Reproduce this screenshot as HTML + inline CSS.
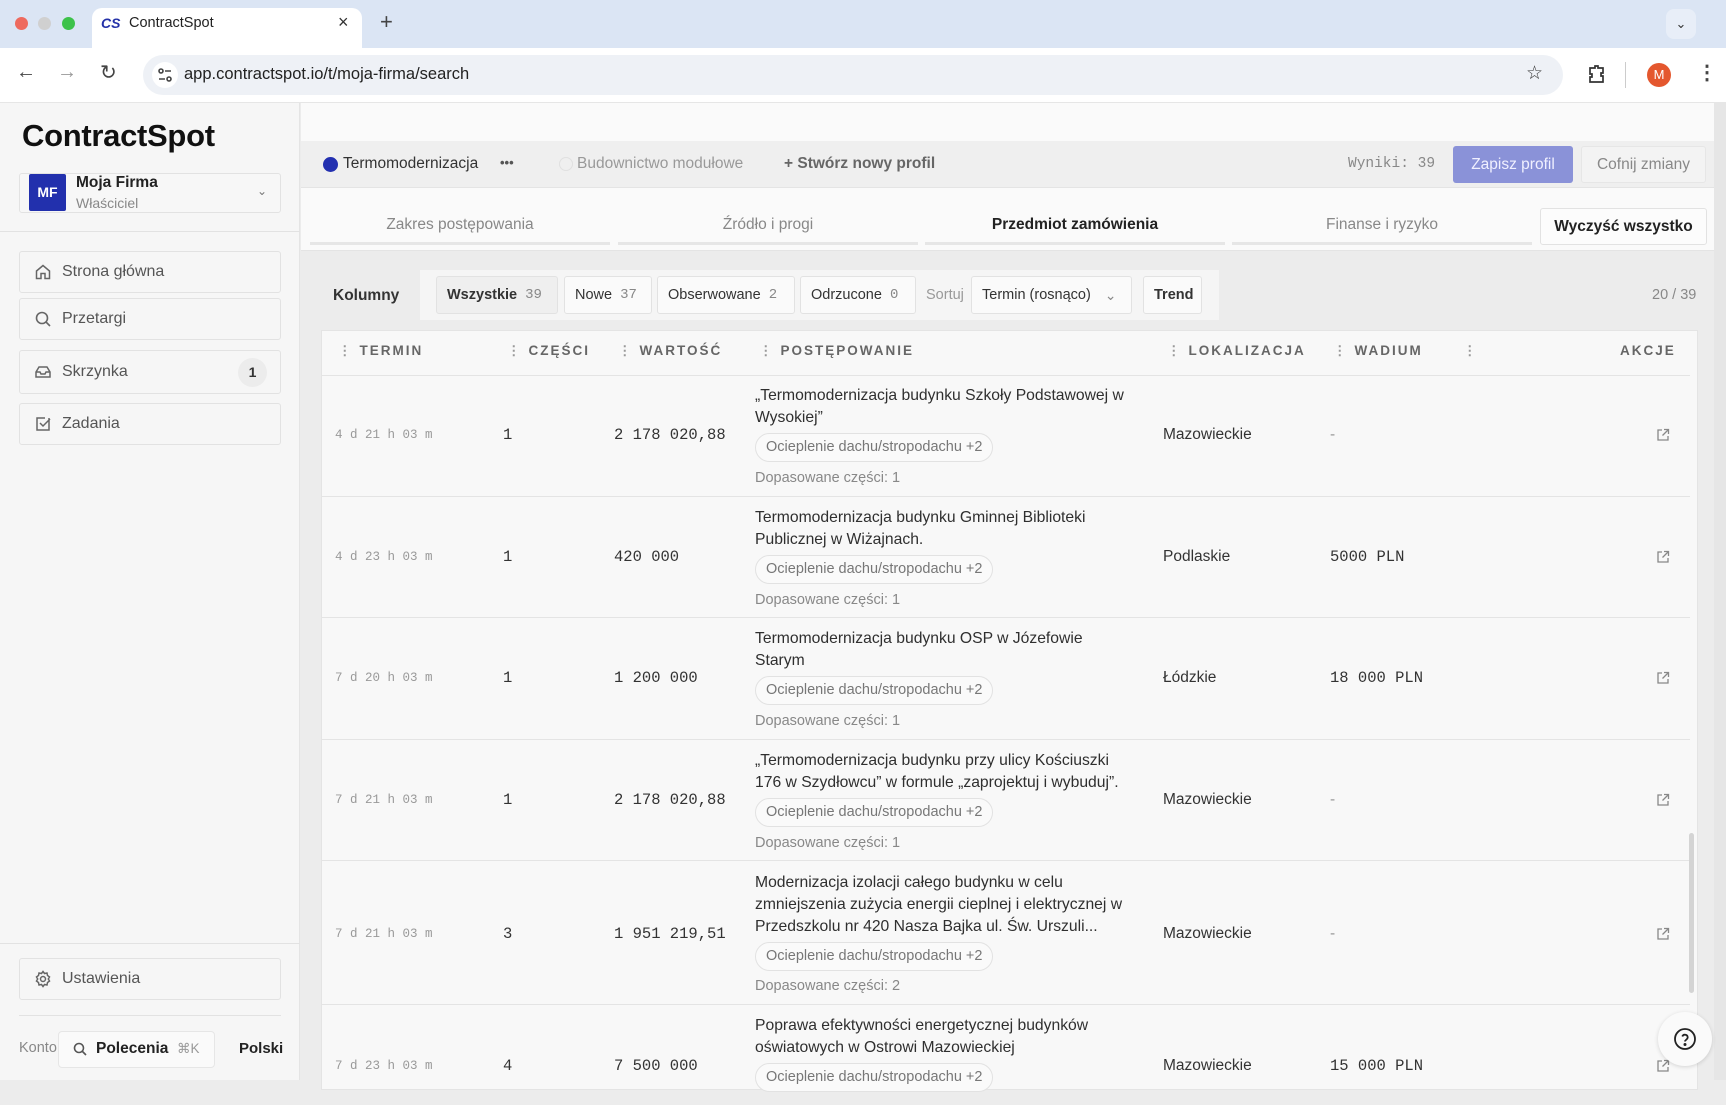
<!DOCTYPE html>
<html><head><meta charset="utf-8"><style>
*{box-sizing:border-box;margin:0;padding:0}
body{width:1726px;height:1080px;overflow:hidden;font-family:"Liberation Sans",sans-serif;color:#2a2a2a;background:#ececec;position:relative}
.a{position:absolute}
.mono{font-family:"Liberation Mono",monospace}
.nav{position:absolute;left:19px;width:262px;border:1px solid #e2e2e2;background:#f6f6f6;border-radius:3px;font-size:16px;color:#555;display:flex;align-items:center;padding-left:42px}
.nav svg{position:absolute;left:14px;top:50%;transform:translateY(-50%)}
.chip{position:absolute;top:276px;height:38px;border:1px solid #e2e2e2;background:#fafafa;border-radius:3px;font-size:14.5px;display:flex;align-items:center;padding:0 10px;color:#333}
.chip b{font-weight:normal}
.chip span{font-family:"Liberation Mono",monospace;color:#888;margin-left:8px;font-size:14px}
.tab{position:absolute;top:189px;height:56px;width:300px;text-align:center;font-size:15.5px;color:#888;line-height:72px;border-bottom:3px solid #e6e6e6}
.hd{position:absolute;top:343px;font-size:13.5px;font-weight:bold;letter-spacing:2px;color:#666}
.hd i{font-style:normal;color:#999;margin-right:8px;letter-spacing:0}
.row{position:absolute;left:322px;width:1368px;border-bottom:1px solid #e4e4e4}
.c{position:absolute;font-size:15.5px;color:#333}
.tm{font-size:12.5px;color:#999}
.t{position:absolute;left:433px;white-space:nowrap;font-size:15.7px;line-height:22px;color:#2f2f2f}
.pill{position:absolute;left:433px;height:29px;border:1px solid #e2e2e2;border-radius:15px;padding:0 10px;font-size:14.5px;color:#777;line-height:27px;background:#fafafa}
.dop{position:absolute;left:433px;font-size:14.5px;color:#888}
.ext{position:absolute;left:1334px}
</style></head><body>
<div class="a" style="left:0;top:0;width:1726px;height:48px;background:#dbe5f4"></div>
<div class="a" style="left:15px;top:17px;width:13px;height:13px;border-radius:50%;background:#ee6a5e"></div>
<div class="a" style="left:38px;top:17px;width:13px;height:13px;border-radius:50%;background:#d0d0d0"></div>
<div class="a" style="left:62px;top:17px;width:13px;height:13px;border-radius:50%;background:#3dc24a"></div>
<div class="a" style="left:92px;top:8px;width:270px;height:42px;background:#fff;border-radius:10px 10px 0 0"></div>
<div class="a" style="left:101px;top:15px;font-size:14px;font-weight:bold;color:#2431a8;font-style:italic">CS</div>
<div class="a" style="left:129px;top:15px;font-size:14.5px;color:#222">ContractSpot</div>
<div class="a" style="left:338px;top:12px;font-size:18px;color:#333">×</div>
<div class="a" style="left:380px;top:9px;font-size:22px;color:#444">+</div>
<div class="a" style="left:1666px;top:9px;width:30px;height:30px;border-radius:8px;background:#e8eef8;text-align:center;font-size:13px;line-height:30px;color:#333">⌄</div>
<div class="a" style="left:0;top:48px;width:1726px;height:55px;background:#fff;border-bottom:1px solid #e6e6e6"></div>
<div class="a" style="left:16px;top:61px;font-size:20px;color:#444">←</div>
<div class="a" style="left:57px;top:61px;font-size:20px;color:#999">→</div>
<div class="a" style="left:100px;top:60px;font-size:20px;color:#444">↻</div>
<div class="a" style="left:143px;top:55px;width:1420px;height:40px;border-radius:20px;background:#eef1f6"></div>
<div class="a" style="left:152px;top:62px;width:26px;height:26px;border-radius:50%;background:#fff"></div>
<svg class="a" style="left:155px;top:65px" width="20" height="20" viewBox="0 0 20 20" fill="none" stroke="#444" stroke-width="1.6"><circle cx="6" cy="6" r="2"/><path d="M10 6h6M4 14h6"/><circle cx="14" cy="14" r="2"/></svg>
<div class="a" style="left:184px;top:65px;font-size:16.5px;color:#222">app.contractspot.io/t/moja-firma/search</div>
<div class="a" style="left:1526px;top:62px;font-size:19px;color:#333">☆</div>
<svg class="a" style="left:1586px;top:63px" width="22" height="22" viewBox="0 0 22 22" fill="none" stroke="#333" stroke-width="1.7"><path d="M4 5h5V3h3v2h5v5h-2v3h2v6H4v-5h2v-3H4z"/></svg>
<div class="a" style="left:1625px;top:62px;width:1px;height:26px;background:#ccc"></div>
<div class="a" style="left:1647px;top:63px;width:24px;height:24px;border-radius:50%;background:#e4572e;color:#fff;font-size:13px;text-align:center;line-height:24px">M</div>
<div class="a" style="left:1697px;top:60px;font-size:20px;color:#444;font-weight:bold">⋮</div>

<div class="a" style="left:0;top:103px;width:300px;height:977px;background:#f6f6f6;border-right:1px solid #e4e4e4"></div>
<div class="a" style="left:22px;top:118px;font-size:31px;font-weight:bold;color:#111;letter-spacing:-0.3px">ContractSpot</div>
<div class="a" style="left:19px;top:173px;width:262px;height:40px;border:1px solid #e2e2e2;border-radius:3px;background:#f7f7f7"></div>
<div class="a" style="left:29px;top:174px;width:37px;height:37px;background:#2230ad;border-radius:2px;color:#fff;font-size:14px;font-weight:bold;text-align:center;line-height:37px">MF</div>
<div class="a" style="left:76px;top:174px;font-size:15.5px;font-weight:bold;color:#222">Moja Firma</div>
<div class="a" style="left:76px;top:195px;font-size:14px;color:#888">Właściciel</div>
<div class="a" style="left:257px;top:184px;font-size:12px;color:#777">⌄</div>
<div class="a" style="left:0;top:231px;width:300px;height:1px;background:#e2e2e2"></div>
<div class="nav" style="top:251px;height:42px"><svg width="18" height="18" viewBox="0 0 18 18" fill="none" stroke="#666" stroke-width="1.5"><path d="M2.5 8L9 2.5 15.5 8v7.5h-4.5v-5h-4v5H2.5z"/></svg>Strona główna</div>
<div class="nav" style="top:298px;height:42px"><svg width="18" height="18" viewBox="0 0 18 18" fill="none" stroke="#666" stroke-width="1.6"><circle cx="8" cy="8" r="5.5"/><path d="M12 12l4 4"/></svg>Przetargi</div>
<div class="nav" style="top:350px;height:44px"><svg width="18" height="18" viewBox="0 0 18 18" fill="none" stroke="#666" stroke-width="1.5"><path d="M2 9l3-5h8l3 5v5H2zM2 9h4l1 2h4l1-2h4"/></svg>Skrzynka<div class="a" style="right:13px;top:7px;width:29px;height:29px;border-radius:50%;background:#ececec;text-align:center;line-height:29px;font-size:14px;font-weight:bold;color:#333">1</div></div>
<div class="nav" style="top:403px;height:42px"><svg width="18" height="18" viewBox="0 0 18 18" fill="none" stroke="#666" stroke-width="1.5"><path d="M15 3v12H3V3h8M6 8l3 3 7-7"/></svg>Zadania</div>
<div class="a" style="left:0;top:943px;width:300px;height:1px;background:#e2e2e2"></div>
<div class="nav" style="top:958px;height:42px"><svg width="18" height="18" viewBox="0 0 18 18" fill="none" stroke="#666" stroke-width="1.5"><circle cx="9" cy="9" r="2.5"/><path d="M9 1.5l1.5 2 2.5-.5.5 2.5 2 1.5-1.2 2 1.2 2-2 1.5-.5 2.5-2.5-.5L9 16.5l-1.5-2-2.5.5-.5-2.5-2-1.5L3.7 9 2.5 7l2-1.5.5-2.5 2.5.5z"/></svg>Ustawienia</div>
<div class="a" style="left:19px;top:1015px;width:262px;height:1px;background:#e2e2e2"></div>
<div class="a" style="left:19px;top:1040px;font-size:14.5px;color:#888">Konto</div>
<div class="a" style="left:58px;top:1031px;width:157px;height:37px;border:1px solid #e6e6e6;border-radius:4px;background:#fafafa"></div>
<svg class="a" style="left:72px;top:1041px" width="16" height="16" viewBox="0 0 16 16" fill="none" stroke="#555" stroke-width="1.6"><circle cx="7" cy="7" r="4.5"/><path d="M10.5 10.5l3.5 3.5"/></svg>
<div class="a" style="left:96px;top:1040px;font-size:15.5px;font-weight:bold;color:#222">Polecenia</div>
<div class="a" style="left:177px;top:1041px;font-size:13.5px;color:#999">⌘K</div>
<div class="a" style="left:239px;top:1040px;font-size:15px;font-weight:bold;color:#222">Polski</div>

<div class="a" style="left:301px;top:103px;width:1413px;height:38px;background:#fafafa"></div>
<div class="a" style="left:301px;top:141px;width:1413px;height:47px;background:#efefef;border-bottom:1px solid #e4e4e4"></div>
<div class="a" style="left:323px;top:157px;width:15px;height:15px;border-radius:50%;background:#2330b0"></div>
<div class="a" style="left:343px;top:155px;font-size:15.5px;color:#333">Termomodernizacja</div>
<div class="a" style="left:500px;top:155px;font-size:13px;color:#555;font-weight:bold">•••</div>
<div class="a" style="left:559px;top:157px;width:14px;height:14px;border-radius:50%;border:1px solid #e0e0e0"></div>
<div class="a" style="left:577px;top:155px;font-size:15.5px;color:#999">Budownictwo modułowe</div>
<div class="a" style="left:784px;top:155px;font-size:15.5px;color:#666;font-weight:bold">+ Stwórz nowy profil</div>
<div class="a mono" style="left:1348px;top:156px;font-size:14.5px;color:#888">Wyniki: 39</div>
<div class="a" style="left:1453px;top:146px;width:120px;height:37px;background:#8a92d8;border-radius:3px;color:#f0f0ff;font-size:15.5px;text-align:center;line-height:37px">Zapisz profil</div>
<div class="a" style="left:1581px;top:146px;width:125px;height:37px;border:1px solid #e6e6e6;background:#f3f3f3;border-radius:3px;color:#888;font-size:15.5px;text-align:center;line-height:35px">Cofnij zmiany</div>
<div class="a" style="left:301px;top:188px;width:1413px;height:63px;background:#fafafa;border-bottom:1px solid #e4e4e4"></div>
<div class="tab" style="left:310px">Zakres postępowania</div>
<div class="tab" style="left:618px">Źródło i progi</div>
<div class="tab" style="left:925px;color:#222;font-weight:bold">Przedmiot zamówienia</div>
<div class="tab" style="left:1232px">Finanse i ryzyko</div>
<div class="a" style="left:1540px;top:208px;width:167px;height:37px;border:1px solid #e2e2e2;background:#fcfcfc;border-radius:3px;font-size:15.5px;font-weight:bold;color:#222;text-align:center;line-height:35px">Wyczyść wszystko</div>

<div class="a" style="left:333px;top:287px;font-size:15.5px;font-weight:bold;color:#333">Kolumny</div>
<div class="a" style="left:420px;top:270px;width:799px;height:50px;background:#f5f5f5"></div>
<div class="chip" style="left:436px;width:122px;background:#efefef"><b style="font-weight:bold">Wszystkie</b><span>39</span></div>
<div class="chip" style="left:564px;width:88px"><b>Nowe</b><span>37</span></div>
<div class="chip" style="left:657px;width:138px"><b>Obserwowane</b><span>2</span></div>
<div class="chip" style="left:800px;width:116px"><b>Odrzucone</b><span>0</span></div>
<div class="a" style="left:926px;top:287px;font-size:14.5px;color:#999">Sortuj</div>
<div class="chip" style="left:971px;width:161px">Termin (rosnąco)<span style="margin-left:14px;font-family:'Liberation Sans'">⌄</span></div>
<div class="chip" style="left:1143px;width:59px;font-weight:bold">Trend</div>
<div class="a" style="left:1652px;top:287px;font-size:14.5px;color:#888">20 / 39</div>

<div class="a" style="left:321px;top:330px;width:1377px;height:760px;background:#f8f8f8;border:1px solid #e4e4e4"></div>
<div class="a" style="left:322px;top:375px;width:1368px;height:1px;background:#e4e4e4"></div>
<div class="hd" style="left:338px"><i>⋮</i>TERMIN</div>
<div class="hd" style="left:507px"><i>⋮</i>CZĘŚCI</div>
<div class="hd" style="left:618px"><i>⋮</i>WARTOŚĆ</div>
<div class="hd" style="left:759px"><i>⋮</i>POSTĘPOWANIE</div>
<div class="hd" style="left:1167px"><i>⋮</i>LOKALIZACJA</div>
<div class="hd" style="left:1333px"><i>⋮</i>WADIUM</div>
<div class="hd" style="left:1463px"><i>⋮</i></div>
<div class="hd" style="left:1620px">AKCJE</div>

<div class="row" style="top:375px;height:122px">
<div class="c mono tm" style="left:13px;top:53px">4 d 21 h 03 m</div>
<div class="c mono" style="left:181px;top:51px">1</div>
<div class="c mono" style="left:292px;top:51px">2 178 020,88</div>
<div class="t" style="top:10px">„Termomodernizacja budynku Szkoły Podstawowej w<br>Wysokiej”</div>
<div class="pill" style="top:58px">Ocieplenie dachu/stropodachu +2</div>
<div class="dop" style="top:95px">Dopasowane części: 1</div>
<div class="c" style="left:841px;top:51px">Mazowieckie</div>
<div class="c" style="left:1008px;top:51px;color:#999">-</div>
<svg class="ext" style="top:53px" width="14" height="14" viewBox="0 0 14 14" fill="none" stroke="#888" stroke-width="1.3"><path d="M6 2H2v10h10V8M8 1.5h4.5V6M12.5 1.5L6.5 7.5"/></svg>
</div>
<div class="row" style="top:497px;height:121px">
<div class="c mono tm" style="left:13px;top:53px">4 d 23 h 03 m</div>
<div class="c mono" style="left:181px;top:51px">1</div>
<div class="c mono" style="left:292px;top:51px">420 000</div>
<div class="t" style="top:10px">Termomodernizacja budynku Gminnej Biblioteki<br>Publicznej w Wiżajnach.</div>
<div class="pill" style="top:58px">Ocieplenie dachu/stropodachu +2</div>
<div class="dop" style="top:95px">Dopasowane części: 1</div>
<div class="c" style="left:841px;top:51px">Podlaskie</div>
<div class="c mono" style="left:1008px;top:51px">5000 PLN</div>
<svg class="ext" style="top:53px" width="14" height="14" viewBox="0 0 14 14" fill="none" stroke="#888" stroke-width="1.3"><path d="M6 2H2v10h10V8M8 1.5h4.5V6M12.5 1.5L6.5 7.5"/></svg>
</div>
<div class="row" style="top:618px;height:122px">
<div class="c mono tm" style="left:13px;top:53px">7 d 20 h 03 m</div>
<div class="c mono" style="left:181px;top:51px">1</div>
<div class="c mono" style="left:292px;top:51px">1 200 000</div>
<div class="t" style="top:10px">Termomodernizacja budynku OSP w Józefowie<br>Starym</div>
<div class="pill" style="top:58px">Ocieplenie dachu/stropodachu +2</div>
<div class="dop" style="top:95px">Dopasowane części: 1</div>
<div class="c" style="left:841px;top:51px">Łódzkie</div>
<div class="c mono" style="left:1008px;top:51px">18 000 PLN</div>
<svg class="ext" style="top:53px" width="14" height="14" viewBox="0 0 14 14" fill="none" stroke="#888" stroke-width="1.3"><path d="M6 2H2v10h10V8M8 1.5h4.5V6M12.5 1.5L6.5 7.5"/></svg>
</div>
<div class="row" style="top:740px;height:121px">
<div class="c mono tm" style="left:13px;top:53px">7 d 21 h 03 m</div>
<div class="c mono" style="left:181px;top:51px">1</div>
<div class="c mono" style="left:292px;top:51px">2 178 020,88</div>
<div class="t" style="top:10px">„Termomodernizacja budynku przy ulicy Kościuszki<br>176 w Szydłowcu” w formule „zaprojektuj i wybuduj”.</div>
<div class="pill" style="top:58px">Ocieplenie dachu/stropodachu +2</div>
<div class="dop" style="top:95px">Dopasowane części: 1</div>
<div class="c" style="left:841px;top:51px">Mazowieckie</div>
<div class="c" style="left:1008px;top:51px;color:#999">-</div>
<svg class="ext" style="top:53px" width="14" height="14" viewBox="0 0 14 14" fill="none" stroke="#888" stroke-width="1.3"><path d="M6 2H2v10h10V8M8 1.5h4.5V6M12.5 1.5L6.5 7.5"/></svg>
</div>
<div class="row" style="top:861px;height:144px">
<div class="c mono tm" style="left:13px;top:66px">7 d 21 h 03 m</div>
<div class="c mono" style="left:181px;top:64px">3</div>
<div class="c mono" style="left:292px;top:64px">1 951 219,51</div>
<div class="t" style="top:11px">Modernizacja izolacji całego budynku w celu<br>zmniejszenia zużycia energii cieplnej i elektrycznej w<br>Przedszkolu nr 420 Nasza Bajka ul. Św. Urszuli...</div>
<div class="pill" style="top:81px">Ocieplenie dachu/stropodachu +2</div>
<div class="dop" style="top:117px">Dopasowane części: 2</div>
<div class="c" style="left:841px;top:64px">Mazowieckie</div>
<div class="c" style="left:1008px;top:64px;color:#999">-</div>
<svg class="ext" style="top:66px" width="14" height="14" viewBox="0 0 14 14" fill="none" stroke="#888" stroke-width="1.3"><path d="M6 2H2v10h10V8M8 1.5h4.5V6M12.5 1.5L6.5 7.5"/></svg>
</div>
<div class="row" style="top:1005px;height:100px;border-bottom:none">
<div class="c mono tm" style="left:13px;top:54px">7 d 23 h 03 m</div>
<div class="c mono" style="left:181px;top:52px">4</div>
<div class="c mono" style="left:292px;top:52px">7 500 000</div>
<div class="t" style="top:10px">Poprawa efektywności energetycznej budynków<br>oświatowych w Ostrowi Mazowieckiej</div>
<div class="pill" style="top:58px">Ocieplenie dachu/stropodachu +2</div>
<div class="c" style="left:841px;top:52px">Mazowieckie</div>
<div class="c mono" style="left:1008px;top:52px">15 000 PLN</div>
<svg class="ext" style="top:54px" width="14" height="14" viewBox="0 0 14 14" fill="none" stroke="#888" stroke-width="1.3"><path d="M6 2H2v10h10V8M8 1.5h4.5V6M12.5 1.5L6.5 7.5"/></svg>
</div>
<div class="a" style="left:1689px;top:833px;width:5px;height:160px;background:#d4d4d4;border-radius:3px"></div>
<div class="a" style="left:1714px;top:103px;width:12px;height:977px;background:#e6e6e6"></div>
<div class="a" style="left:1658px;top:1012px;width:54px;height:54px;border-radius:50%;background:#fafafa;box-shadow:0 1px 4px rgba(0,0,0,.15)"></div>
<svg class="a" style="left:1673px;top:1027px" width="24" height="24" viewBox="0 0 24 24" fill="none" stroke="#222" stroke-width="1.8"><circle cx="12" cy="12" r="10"/><path d="M9.3 9.5a2.8 2.8 0 0 1 5.4 1c0 1.8-2.7 2.4-2.7 4"/><circle cx="12" cy="17.5" r=".6" fill="#222"/></svg>
</body></html>
